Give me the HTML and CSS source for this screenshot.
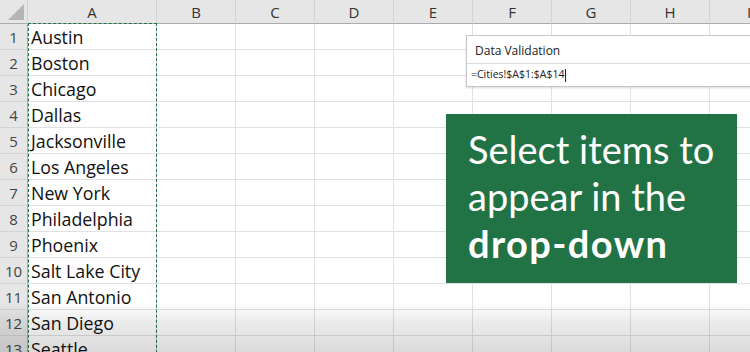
FILE: index.html
```html
<!DOCTYPE html>
<html lang="en">
<head>
    <meta charset="UTF-8">
    <title>Data Validation</title>
    <link rel="stylesheet" href="styles.css">
</head>
<body>
    <div class="sheet">
        <div class="grid">
            <div class="corner"><div class="corner-tri"></div></div>
            <div class="col-head">A</div>
            <div class="col-head">B</div>
            <div class="col-head">C</div>
            <div class="col-head">D</div>
            <div class="col-head">E</div>
            <div class="col-head">F</div>
            <div class="col-head">G</div>
            <div class="col-head">H</div>
            <div class="col-head">I</div>
        </div>
        <div id="rows"></div>

        <div class="marquee"></div>

        <div class="dv-box">
            <div class="dv-title">Data Validation</div>
            <div class="dv-input">=Cities!$A$1:$A$14<span class="caret"></span></div>
        </div>

        <div class="callout">
            Select items to<br>
            appear in the<br>
            <strong>drop-down</strong>
        </div>

        <div class="fade"></div>
    </div>

    <script>
        // build the rows of the sheet
        const cities = ['Austin', 'Boston', 'Chicago', 'Dallas', 'Jacksonville', 'Los Angeles',
            'New York', 'Philadelphia', 'Phoenix', 'Salt Lake City', 'San Antonio', 'San Diego', 'Seattle'];
        const rows = document.getElementById('rows');
        cities.forEach(function(city, i) {
            const row = document.createElement('div');
            row.className = 'grid row';
            let html = '<div class="row-head">' + (i + 1) + '</div>';
            html += '<div class="cell">' + city + '</div>';
            for (let c = 0; c < 8; c++) {
                html += '<div class="cell"></div>';
            }
            row.innerHTML = html;
            rows.appendChild(row);
        });
    </script>
</body>
</html>
```

FILE: styles.css
```css
body {
    margin: 0;
    padding: 0;
    background-color: #fff;
    font-family: 'Open Sans', 'Noto Sans', sans-serif;
    overflow: hidden;
}
.sheet {
    position: relative;
    width: 750px;
    height: 352px;
    overflow: hidden;
}
.grid {
    display: grid;
    grid-template-columns: 28px 129px repeat(8, 79px);
    width: 789px;
}
.corner {
    height: 24px;
    background-color: #e6e6e6;
    border-bottom: 1px solid #ababab;
    border-right: 1px solid #d4d4d4;
    box-sizing: border-box;
    position: relative;
}
.corner-tri {
    position: absolute;
    right: 3px;
    bottom: 3px;
    width: 0;
    height: 0;
    border-left: 16px solid transparent;
    border-bottom: 16px solid #b4b4b4;
}
.col-head {
    height: 24px;
    background-color: #e6e6e6;
    border-bottom: 1px solid #ababab;
    border-right: 1px solid #d4d4d4;
    box-sizing: border-box;
    text-align: center;
    font-size: 15px;
    line-height: 24px;
    color: #333;
}
.row-head {
    height: 26px;
    background-color: #e6e6e6;
    border-bottom: 1px solid #d4d4d4;
    border-right: 1px solid #ababab;
    box-sizing: border-box;
    text-align: center;
    font-size: 15px;
    line-height: 27px;
    color: #444;
}
.cell {
    height: 26px;
    border-bottom: 1px solid #e1e1e1;
    border-right: 1px solid #e1e1e1;
    box-sizing: border-box;
    font-size: 17.8px;
    line-height: 27px;
    padding-left: 3px;
    color: #111;
    white-space: nowrap;
}
.marquee {
    position: absolute;
    left: 28px;
    top: 23px;
    width: 129px;
    height: 340px;
    border: 1px dashed #217346;
    box-sizing: border-box;
}
.dv-box {
    position: absolute;
    left: 466px;
    top: 35px;
    width: 300px;
    height: 50px;
    background-color: #fff;
    border: 1px solid #c6c6c6;
    box-shadow: 0 1px 2px rgba(0,0,0,0.15);
}
.dv-title {
    height: 27px;
    font-size: 12px;
    line-height: 29px;
    padding-left: 8px;
    color: #222;
    border-bottom: 1px solid #dadada;
}
.dv-input {
    font-size: 10.5px;
    line-height: 20px;
    padding-left: 4px;
    color: #222;
}
.caret {
    display: inline-block;
    width: 1px;
    height: 13px;
    background-color: #222;
    vertical-align: middle;
    margin-left: 1px;
}
.callout {
    position: absolute;
    left: 446px;
    top: 114px;
    width: 291px;
    height: 169px;
    box-sizing: border-box;
    padding: 12px 0 0 22px;
    background-color: #217346;
    color: #fff;
    font-family: 'Lato', sans-serif;
    font-size: 38px;
    line-height: 47px;
}
.callout strong {
    font-weight: bold;
    letter-spacing: 1.4px;
}
.fade {
    position: absolute;
    left: 0;
    right: 0;
    bottom: 0;
    height: 50px;
    background: linear-gradient(to bottom, rgba(0,0,0,0) 0%, rgba(0,0,0,0.08) 40%, rgba(0,0,0,0.14) 100%);
}
```
